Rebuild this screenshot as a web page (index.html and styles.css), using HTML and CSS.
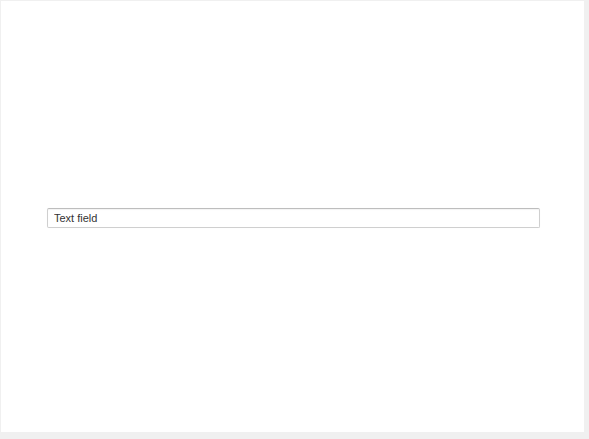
FILE: index.html
```html
<!DOCTYPE html>
<html lang="en">
<head>
    <meta charset="UTF-8">
    <title>Text field</title>
    <link rel="stylesheet" href="styles.css">
</head>
<body>
    <main class="panel">
        <input class="text-field" type="text" value="Text field">
    </main>
</body>
</html>
```

FILE: styles.css
```css
/* page frame */
html, body {
    height: 100%;
}

body {
    margin: 0;
    padding: 1px 5px 7px 1px;
    box-sizing: border-box;
    background: #f0f0f0;
    font-family: 'Liberation Sans', Arial, sans-serif;
}

.panel {
    height: 100%;
    background: #fff;
    display: flex;
    align-items: center;
    padding: 3px 44px 0 46px;
    box-sizing: border-box;
}

.text-field {
    flex: 1;
    height: 20px;
    box-sizing: border-box;
    margin: 0;
    padding: 0 6px;
    border: 1px solid #cfcfcf;
    border-top-color: #bdbdbd;
    border-radius: 2px;
    box-shadow: inset 0 1px 1px rgba(0, 0, 0, 0.05), 0 0 1px rgba(0, 0, 0, 0.05);
    font-family: inherit;
    font-size: 11px;
    color: #333;
    background: #fff;
    outline: none;
}
```
